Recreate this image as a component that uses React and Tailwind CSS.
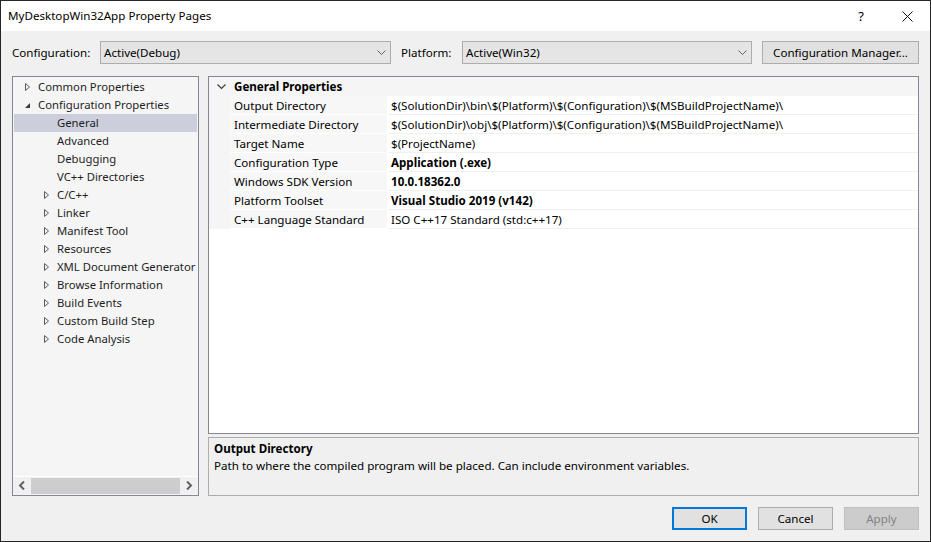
const font = { fontFamily: '"Noto Sans", "Open Sans", sans-serif' };

const tree = [
  { label: "Common Properties", level: 0, arrow: "closed" },
  { label: "Configuration Properties", level: 0, arrow: "open" },
  { label: "General", level: 1, selected: true },
  { label: "Advanced", level: 1 },
  { label: "Debugging", level: 1 },
  { label: "VC++ Directories", level: 1 },
  { label: "C/C++", level: 1, arrow: "closed" },
  { label: "Linker", level: 1, arrow: "closed" },
  { label: "Manifest Tool", level: 1, arrow: "closed" },
  { label: "Resources", level: 1, arrow: "closed" },
  { label: "XML Document Generator", level: 1, arrow: "closed" },
  { label: "Browse Information", level: 1, arrow: "closed" },
  { label: "Build Events", level: 1, arrow: "closed" },
  { label: "Custom Build Step", level: 1, arrow: "closed" },
  { label: "Code Analysis", level: 1, arrow: "closed" },
];

const props = [
  { name: "Output Directory", value: "$(SolutionDir)\\bin\\$(Platform)\\$(Configuration)\\$(MSBuildProjectName)\\" },
  { name: "Intermediate Directory", value: "$(SolutionDir)\\obj\\$(Platform)\\$(Configuration)\\$(MSBuildProjectName)\\" },
  { name: "Target Name", value: "$(ProjectName)" },
  { name: "Configuration Type", value: "Application (.exe)", bold: true },
  { name: "Windows SDK Version", value: "10.0.18362.0", bold: true },
  { name: "Platform Toolset", value: "Visual Studio 2019 (v142)", bold: true },
  { name: "C++ Language Standard", value: "ISO C++17 Standard (std:c++17)" },
];

const ClosedArrow = () => (
  <svg width="6" height="10" viewBox="0 0 6 10" className="ml-[3px]">
    <path d="M0.5 1.5 L4.5 5 L0.5 8.5 Z" fill="none" stroke="#5a5a5a" strokeWidth="1" />
  </svg>
);

const OpenArrow = () => (
  <svg width="7" height="10" viewBox="0 0 7 10" className="ml-[2px]">
    <path d="M6 3 L6 8 L1 8 Z" fill="#3c3c3c" />
  </svg>
);

const ComboChevron = () => (
  <svg width="9" height="5" viewBox="0 0 9 5">
    <path d="M0.5 0.5 L4.5 4.5 L8.5 0.5" fill="none" stroke="#606060" strokeWidth="1" />
  </svg>
);

const Combo = ({ value, width }) => (
  <div className={`h-[23px] ${width} border border-[#adadad] bg-[#e5e5e5] flex items-center justify-between pl-[3px] pr-[4px]`}>
    <span>{value}</span>
    <ComboChevron />
  </div>
);

const TreeRow = ({ item }) => (
  <div
    className={`h-[18px] flex items-center mx-[1px] text-[#1e1e1e] text-[11.3px] ${item.selected ? "bg-[#cccedb]" : ""} ${
      item.level === 0 ? "pl-[8px]" : "pl-[27px]"
    }`}
  >
    <div className="w-[16px] shrink-0 flex items-center">
      {item.arrow === "closed" && <ClosedArrow />}
      {item.arrow === "open" && <OpenArrow />}
    </div>
    <span className="whitespace-nowrap">{item.label}</span>
  </div>
);

const Button = ({ children, primary, disabled }) => (
  <div
    className={`w-[75px] h-[23px] flex items-center justify-center ${
      primary
        ? "border-2 border-[#0078d7] bg-[#e1e1e1]"
        : disabled
        ? "border border-[#bfbfbf] bg-[#cccccc] text-[#838383]"
        : "border border-[#adadad] bg-[#e1e1e1]"
    }`}
  >
    {children}
  </div>
);

export default function App() {
  return (
    <div
      style={font}
      className="w-[931px] h-[542px] border border-[#262626] bg-[#f0f0f0] flex flex-col text-[11.6px] text-black leading-none overflow-hidden"
    >
      {/* Title bar */}
      <div className="h-[30px] bg-white flex items-center justify-between pl-[7px]">
        <span>MyDesktopWin32App Property Pages</span>
        <div className="flex items-center h-full">
          <span className="w-[46px] text-center text-[13px]">?</span>
          <div className="w-[46px] flex justify-center">
            <svg width="11" height="11" viewBox="0 0 11 11">
              <path d="M0.5 0.5 L10.5 10.5 M10.5 0.5 L0.5 10.5" stroke="#111" strokeWidth="1" />
            </svg>
          </div>
        </div>
      </div>

      {/* Configuration row */}
      <div className="mt-[10px] px-[11px] flex items-center">
        <span className="w-[88px]">Configuration:</span>
        <Combo value="Active(Debug)" width="w-[291px]" />
        <span className="ml-[10px] w-[61px]">Platform:</span>
        <Combo value="Active(Win32)" width="w-[290px]" />
        <div className="ml-[10px] w-[157px] h-[23px] border border-[#adadad] bg-[#e1e1e1] flex items-center justify-center">
          Configuration Manager...
        </div>
      </div>

      {/* Main area */}
      <div className="mt-[12px] h-[420px] px-[11px] flex gap-[9px]">
        {/* Tree */}
        <div className="w-[187px] h-full border border-[#828790] bg-[#f5f5f5] flex flex-col overflow-hidden">
          <div className="flex-1 pt-[1px] overflow-hidden">
            {tree.map((item) => (
              <TreeRow key={item.label} item={item} />
            ))}
          </div>
          <div className="h-[18px] mb-[1px] border-t border-white bg-[#f0f0f0] flex items-center px-[5px] gap-[5px]">
            <svg width="8" height="9" viewBox="0 0 8 9">
              <path d="M6 0.5 L2 4.5 L6 8.5" fill="none" stroke="#606060" strokeWidth="2" />
            </svg>
            <div className="flex-1 h-[16px] bg-[#cdcdcd]" />
            <svg width="8" height="9" viewBox="0 0 8 9">
              <path d="M2 0.5 L6 4.5 L2 8.5" fill="none" stroke="#606060" strokeWidth="2" />
            </svg>
          </div>
        </div>

        {/* Right column */}
        <div className="flex-1 flex flex-col gap-[3px]">
          <div className="h-[359px] border border-[#828790] bg-white">
            <div className="h-[19px] bg-[#f5f5f5] flex items-center">
              <div className="w-[25px] flex justify-center">
                <svg width="9" height="6" viewBox="0 0 9 6">
                  <path d="M0.5 0.5 L4.5 4.5 L8.5 0.5" fill="none" stroke="#3c3c3c" strokeWidth="1.2" />
                </svg>
              </div>
              <span className="font-bold">General Properties</span>
            </div>
            {props.map((p) => (
              <div key={p.name} className="h-[19px] flex">
                <div className="w-[21px] bg-[#f5f5f5]" />
                <div className="w-[158px] bg-[#f7f7f7] border-b border-r border-white flex items-center pl-[4px] pt-[1px]">
                  {p.name}
                </div>
                <div
                  className={`flex-1 border-b border-[#f0f0f0] flex items-center pl-[3px] pt-[1px] whitespace-nowrap ${
                    p.bold ? "font-bold" : ""
                  }`}
                >
                  {p.value}
                </div>
              </div>
            ))}
          </div>
          <div className="h-[59px] border border-[#adadad] bg-[#f0f0f0] px-[5px] pt-[5px]">
            <div className="font-bold">Output Directory</div>
            <div className="mt-[5px]">Path to where the compiled program will be placed. Can include environment variables.</div>
          </div>
        </div>
      </div>

      {/* Buttons */}
      <div className="mt-[11px] px-[11px] flex justify-end gap-[11px]">
        <Button primary>OK</Button>
        <Button>Cancel</Button>
        <Button disabled>Apply</Button>
      </div>
    </div>
  );
}
